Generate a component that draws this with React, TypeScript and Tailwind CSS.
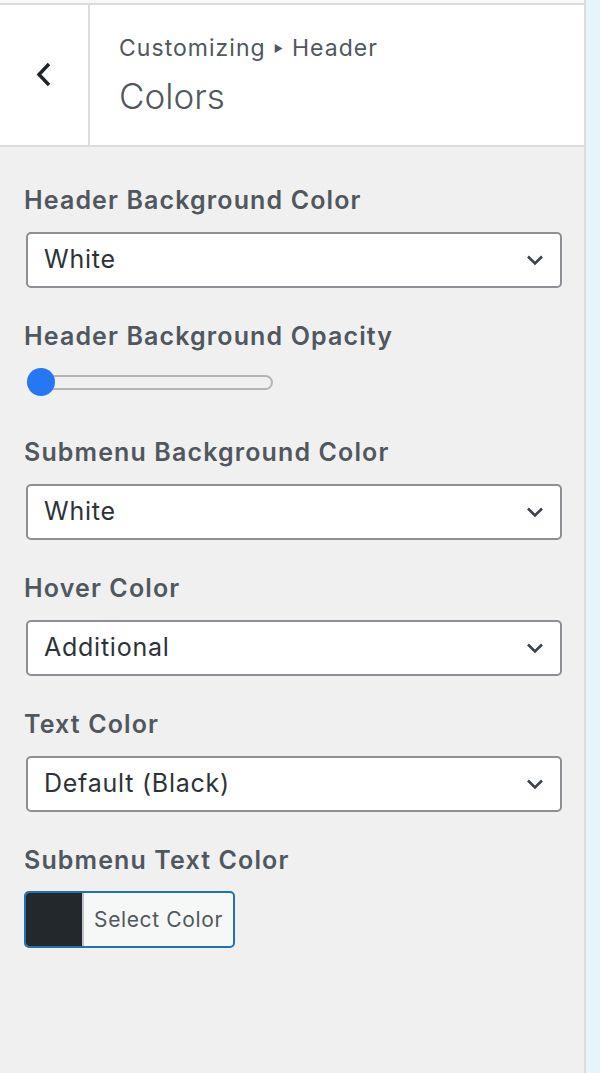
import { useState } from 'react';

const font = { fontFamily: '"Inter", "Liberation Sans", sans-serif' };

function Chevron() {
  return (
    <svg width="18" height="12" viewBox="0 0 18 12" className="absolute right-4 top-1/2 -translate-y-1/2">
      <path d="M2 2.5 L9 9.5 L16 2.5" fill="none" stroke="#3c434a" strokeWidth="2.6" />
    </svg>
  );
}

function Label({ children }: { children: string }) {
  return <div className="text-[25px] font-semibold leading-[32px] tracking-[0.045em] text-[#50575e]">{children}</div>;
}

function SelectField({ label, value }: { label: string; value: string }) {
  return (
    <div>
      <Label>{label}</Label>
      <div className="relative mt-[16px] ml-[2px] h-[56px] w-[536px] rounded-[5px] border-2 border-[#8c8f94] bg-white">
        <span className="absolute left-[16px] top-1/2 -translate-y-1/2 text-[25px] tracking-[0.03em] text-[#2c3338]">{value}</span>
        <Chevron />
      </div>
    </div>
  );
}

export default function App() {
  const [hoverColor] = useState('Additional');

  return (
    <div className="flex h-[1073px] w-[600px] overflow-hidden bg-[#e5f5fa]" style={font}>
      <div className="flex h-full w-[586px] flex-col border-r-2 border-[#dcdcde] bg-[#f0f0f1]">
        {/* header */}
        <div className="h-[3px] bg-[#f6f7f7]" />
        <div className="flex h-[144px] border-y-2 border-[#dcdcde] bg-white">
          <div className="flex w-[90px] items-center justify-center border-r-2 border-[#dcdcde]">
            <svg width="20" height="28" viewBox="0 0 20 28">
              <path d="M15 3 L5 13.5 L15 24" fill="none" stroke="#1d2327" strokeWidth="3.4" />
            </svg>
          </div>
          <div className="flex flex-col pl-[29px] pt-[28px]">
            <div className="flex items-center text-[23px] leading-[30px] tracking-[0.045em] text-[#50575e]">
              Customizing
              <span className="mx-[8px] text-[10px] leading-none">▶</span>
              Header
            </div>
            <div className="mt-[13px] text-[35px] font-light leading-[40px] text-[#50575e]">Colors</div>
          </div>
        </div>

        {/* body */}
        <div className="flex flex-col px-[24px] pt-[37px]">
          <SelectField label="Header Background Color" value="White" />

          <div className="mt-[32px]">
            <Label>Header Background Opacity</Label>
            <div className="relative mt-[16px] flex h-[28px] w-[250px] items-center">
              <div className="ml-[3px] h-[15px] w-[246px] rounded-full border-2 border-[#b4b4b4] bg-[#f0f0f1]" />
              <div className="absolute left-[3px] top-0 h-[28px] w-[28px] rounded-full bg-[#2577f4]" />
            </div>
          </div>

          <div className="mt-[40px]">
            <SelectField label="Submenu Background Color" value="White" />
          </div>
          <div className="mt-[32px]">
            <SelectField label="Hover Color" value={hoverColor} />
          </div>
          <div className="mt-[32px]">
            <SelectField label="Text Color" value="Default (Black)" />
          </div>

          <div className="mt-[32px]">
            <Label>Submenu Text Color</Label>
            <div className="mt-[15px] flex h-[57px] w-[211px] overflow-hidden rounded-[5px] border-2 border-[#2271b1] bg-[#f6f7f7]">
              <div className="w-[58px] border-r-2 border-[#c3c4c7] bg-[#23282d]" />
              <div className="flex flex-1 items-center justify-center text-[21px] tracking-[0.03em] text-[#50575e]">Select Color</div>
            </div>
          </div>
        </div>
      </div>
    </div>
  );
}
